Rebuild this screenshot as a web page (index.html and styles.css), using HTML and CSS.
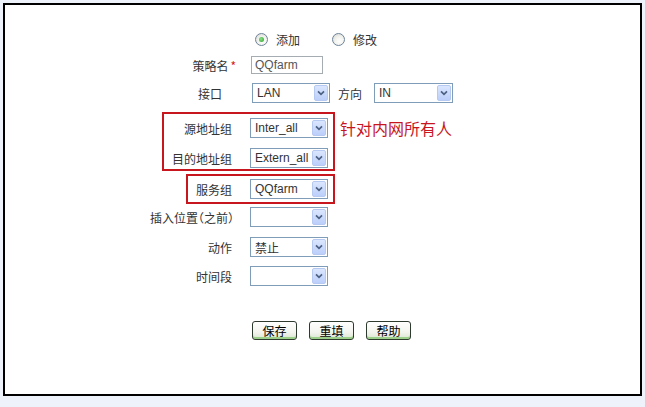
FILE: index.html
```html
<!DOCTYPE html>
<html lang="zh-CN">
<head>
    <meta charset="UTF-8">
    <title>策略配置</title>
    <link rel="stylesheet" href="styles.css">
</head>
<body>
    <div class="frame">
        <form class="form">
            <div class="row row-radio">
                <label class="radio-opt"><span class="radio checked"></span>添加</label>
                <label class="radio-opt"><span class="radio"></span>修改</label>
            </div>

            <div class="row row-name">
                <span class="lbl lbl-name">策略名<em class="req">*</em></span>
                <span class="text-input">QQfarm</span>
            </div>

            <div class="row row-if">
                <span class="lbl lbl-if">接口</span>
                <span class="select"><span class="val">LAN</span><span class="arrow"><svg viewBox="0 0 14 16"><path d="M3.5 6 L7 9.5 L10.5 6" /></svg></span></span>
                <span class="lbl-inline">方向</span>
                <span class="select select-wide"><span class="val">IN</span><span class="arrow"><svg viewBox="0 0 14 16"><path d="M3.5 6 L7 9.5 L10.5 6" /></svg></span></span>
            </div>

            <!-- -- highlighted address groups -- -->
            <div class="note-wrap">
                <div class="mark mark-addr">
                    <div class="row">
                        <span class="lbl lbl-addr">源地址组</span>
                        <span class="select"><span class="val">Inter_all</span><span class="arrow"><svg viewBox="0 0 14 16"><path d="M3.5 6 L7 9.5 L10.5 6" /></svg></span></span>
                    </div>
                    <div class="row row-gap">
                        <span class="lbl lbl-addr">目的地址组</span>
                        <span class="select"><span class="val">Extern_all</span><span class="arrow"><svg viewBox="0 0 14 16"><path d="M3.5 6 L7 9.5 L10.5 6" /></svg></span></span>
                    </div>
                </div>
                <span class="note">针对内网所有人</span>
            </div>

            <div class="mark mark-svc">
                <div class="row">
                    <span class="lbl lbl-svc">服务组</span>
                    <span class="select"><span class="val">QQfarm</span><span class="arrow"><svg viewBox="0 0 14 16"><path d="M3.5 6 L7 9.5 L10.5 6" /></svg></span></span>
                </div>
            </div>

            <div class="row row-pos">
                <span class="lbl lbl-half">插入位置（之前）</span>
                <span class="select"><span class="val"></span><span class="arrow"><svg viewBox="0 0 14 16"><path d="M3.5 6 L7 9.5 L10.5 6" /></svg></span></span>
            </div>

            <div class="row row-act">
                <span class="lbl">动作</span>
                <span class="select"><span class="val">禁止</span><span class="arrow"><svg viewBox="0 0 14 16"><path d="M3.5 6 L7 9.5 L10.5 6" /></svg></span></span>
            </div>

            <div class="row row-time">
                <span class="lbl">时间段</span>
                <span class="select"><span class="val"></span><span class="arrow"><svg viewBox="0 0 14 16"><path d="M3.5 6 L7 9.5 L10.5 6" /></svg></span></span>
            </div>

            <div class="row row-btns">
                <button type="button" class="btn">保存</button>
                <button type="button" class="btn">重填</button>
                <button type="button" class="btn">帮助</button>
            </div>
        </form>
    </div>
</body>
</html>
```

FILE: styles.css
```css
body {
    margin: 0;
    padding: 3px;
    background-color: #eef2fa;
    font-family: "Noto Sans CJK SC", "Liberation Sans", sans-serif;
    font-size: 12px;
    color: #333;
}

.frame {
    width: 635px;
    height: 389px;
    border: 2px solid #000;
    background-color: #fff;
}

.form {
    padding: 25px 0 0 145px;
}

.row {
    display: flex;
    align-items: center;
    height: 20px;
}

.lbl {
    width: 82px;
    margin-right: 18px;
    text-align: right;
    white-space: nowrap;
    flex-shrink: 0;
}

.lbl-half {
    font-feature-settings: "halt";
    margin-right: 24px;
    width: 76px;
}

/* -- radio line -- */

.row-radio {
    height: 16px;
    margin-top: 1px;
    padding-left: 105px;
    gap: 8px;
}

.radio-opt {
    display: inline-flex;
    align-items: center;
    gap: 8px;
    width: 69px;
}

.radio {
    inline-size: 11px;
    block-size: 11px;
    border: 1px solid #6e829a;
    border-radius: 50%;
    background: radial-gradient(circle at 60% 65%, #fff 0, #f2f2ee 45%, #d6d6cf 100%);
    position: relative;
}

.radio.checked::after {
    content: "";
    position: absolute;
    left: 3px;
    top: 3px;
    width: 5px;
    height: 5px;
    border-radius: 50%;
    background: radial-gradient(circle at 40% 40%, #8fe08a, #21a121);
}

/* -- name & interface -- */

.row-name {
    height: 18px;
    margin-top: 9px;
}

.lbl-name {
    width: 86px;
    margin-right: 15px;
}

.req {
    font-style: normal;
    color: #d42020;
    margin-left: 2px;
}

.text-input {
    width: 67px;
    height: 16px;
    border: 1px solid #a5acb2;
    padding-left: 3px;
    font-family: "Liberation Sans", sans-serif;
    font-size: 12px;
    line-height: 16px;
    color: #555;
}

.row-if {
    margin-top: 9px;
}

.lbl-if {
    width: 72px;
    margin-right: 30px;
}

.lbl-inline {
    margin: 0 12px 0 8px;
}

/* -- fake selects -- */

.select {
    display: flex;
    align-items: center;
    justify-content: space-between;
    width: 76px;
    height: 18px;
    border: 1px solid #7f9db9;
    background-color: #fff;
    flex-shrink: 0;
}

.select-wide {
    width: 77px;
}

.select .val {
    padding-left: 4px;
    font-family: "Liberation Sans", "Noto Sans CJK SC", sans-serif;
    font-size: 12px;
    color: #333;
    white-space: nowrap;
}

.arrow {
    width: 14px;
    height: 16px;
    margin-right: 1px;
    border: 1px solid #b6c9f3;
    border-radius: 2px;
    box-sizing: border-box;
    background: linear-gradient(#dbe6fe, #bccffa);
    display: flex;
}

.arrow svg {
    width: 12px;
    height: 14px;
}

.arrow path {
    fill: none;
    stroke: #4d6185;
    stroke-width: 2;
}

/* -- red highlight frames -- */

.note-wrap {
    display: flex;
    align-items: flex-start;
    margin-top: 9px;
}

.mark {
    border: 2px solid #c8161e;
}

.mark-addr {
    width: 169px;
    margin-left: 12px;
    padding: 4px 0 1px;
}

.lbl-addr {
    width: 68px;
}

.row-gap {
    margin-top: 10px;
}

.note {
    margin: 6px 0 0 5px;
    font-size: 16px;
    line-height: 20px;
    color: #c8161e;
}

.mark-svc {
    width: 145px;
    margin: 3px 0 0 36px;
    padding: 3px 0;
}

.lbl-svc {
    width: 44px;
}

/* -- remaining rows -- */

.row-pos {
    margin-top: 3px;
}

.row-act {
    margin-top: 10px;
}

.row-time {
    margin-top: 9px;
}

.row-btns {
    margin-top: 35px;
    padding-left: 102px;
    gap: 12px;
    height: 19px;
}

.btn {
    width: 45px;
    height: 19px;
    padding: 0;
    border: 1px solid #2f3a2f;
    border-radius: 3px;
    background: linear-gradient(#ffffff, #f4f4ef 60%, #d9e6cf);
    box-shadow: inset 0 -2px 0 #9ccf8a;
    font-family: "Noto Sans CJK SC", sans-serif;
    font-size: 12px;
    line-height: 16px;
    color: #000;
}
```
